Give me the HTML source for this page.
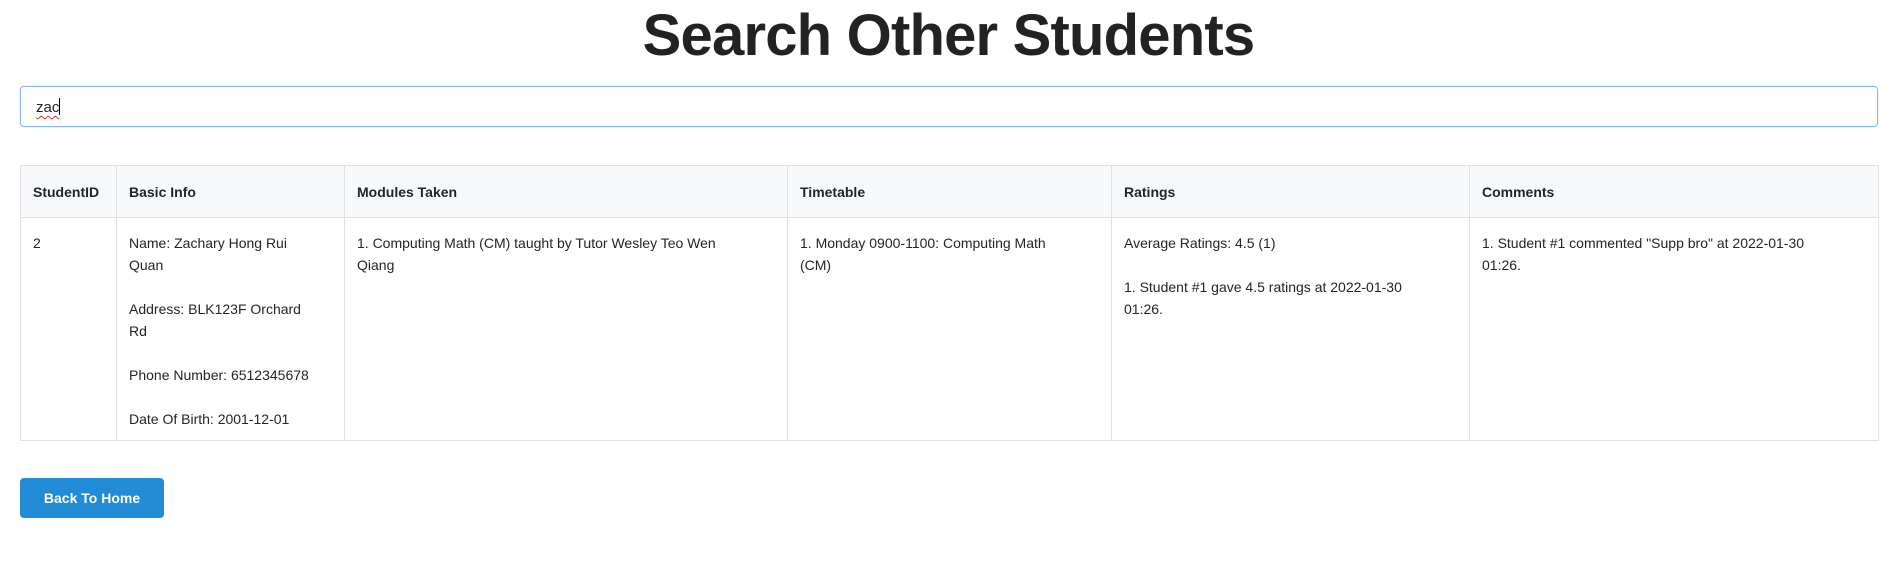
<!DOCTYPE html>
<html><head><meta charset="utf-8"><style>
*{box-sizing:border-box;margin:0;padding:0}
body{width:1897px;height:571px;background:#fff;font-family:"Liberation Sans",sans-serif;color:#212529;position:relative;overflow:hidden}
h1{position:absolute;left:0;top:0px;width:1897px;text-align:center;font-size:58px;font-weight:bold;letter-spacing:-0.8px;color:#222;line-height:72px}
.inp{position:absolute;left:20px;top:86px;width:1858px;height:41px;border:1px solid #86b7fe;border-radius:4px;box-shadow:0 0 0 1px rgba(13,110,253,.08);font-size:15px;padding:11px 15px;line-height:18px}
.inp span{text-decoration:underline wavy #d33;text-decoration-thickness:1px;text-underline-offset:3px}
.inp i{display:inline-block;width:1px;height:17px;background:#000;vertical-align:-3px}
table{position:absolute;left:20px;top:165px;width:1858px;border-collapse:collapse;table-layout:fixed;font-size:14px}
td,th{border:1px solid #dee2e6;vertical-align:top;text-align:left;padding:0 12px;white-space:nowrap}
th{background:#f8f9fa;height:52px;vertical-align:middle;font-weight:bold}
td{height:223px;padding-top:14px;line-height:22px}
.btn{position:absolute;left:20px;top:478px;width:144px;height:40px;background:#228bd6;border-radius:4px;color:#fff;font-weight:bold;font-size:14px;text-align:center;line-height:40px}
</style></head><body>
<h1>Search Other Students</h1>
<div class="inp"><span>zac</span><i></i></div>
<table>
<colgroup><col style="width:96px"><col style="width:228px"><col style="width:443px"><col style="width:324px"><col style="width:358px"><col style="width:409px"></colgroup>
<tr><th>StudentID</th><th>Basic Info</th><th>Modules Taken</th><th>Timetable</th><th>Ratings</th><th>Comments</th></tr>
<tr><td>2</td>
<td>Name: Zachary Hong Rui<br>Quan<br><br>Address: BLK123F Orchard<br>Rd<br><br>Phone Number: 6512345678<br><br>Date Of Birth: 2001-12-01</td>
<td>1. Computing Math (CM) taught by Tutor Wesley Teo Wen<br>Qiang</td>
<td>1. Monday 0900-1100: Computing Math<br>(CM)</td>
<td>Average Ratings: 4.5 (1)<br><br>1. Student #1 gave 4.5 ratings at 2022-01-30<br>01:26.</td>
<td>1. Student #1 commented "Supp bro" at 2022-01-30<br>01:26.</td></tr>
</table>
<div class="btn">Back To Home</div>
</body></html>
